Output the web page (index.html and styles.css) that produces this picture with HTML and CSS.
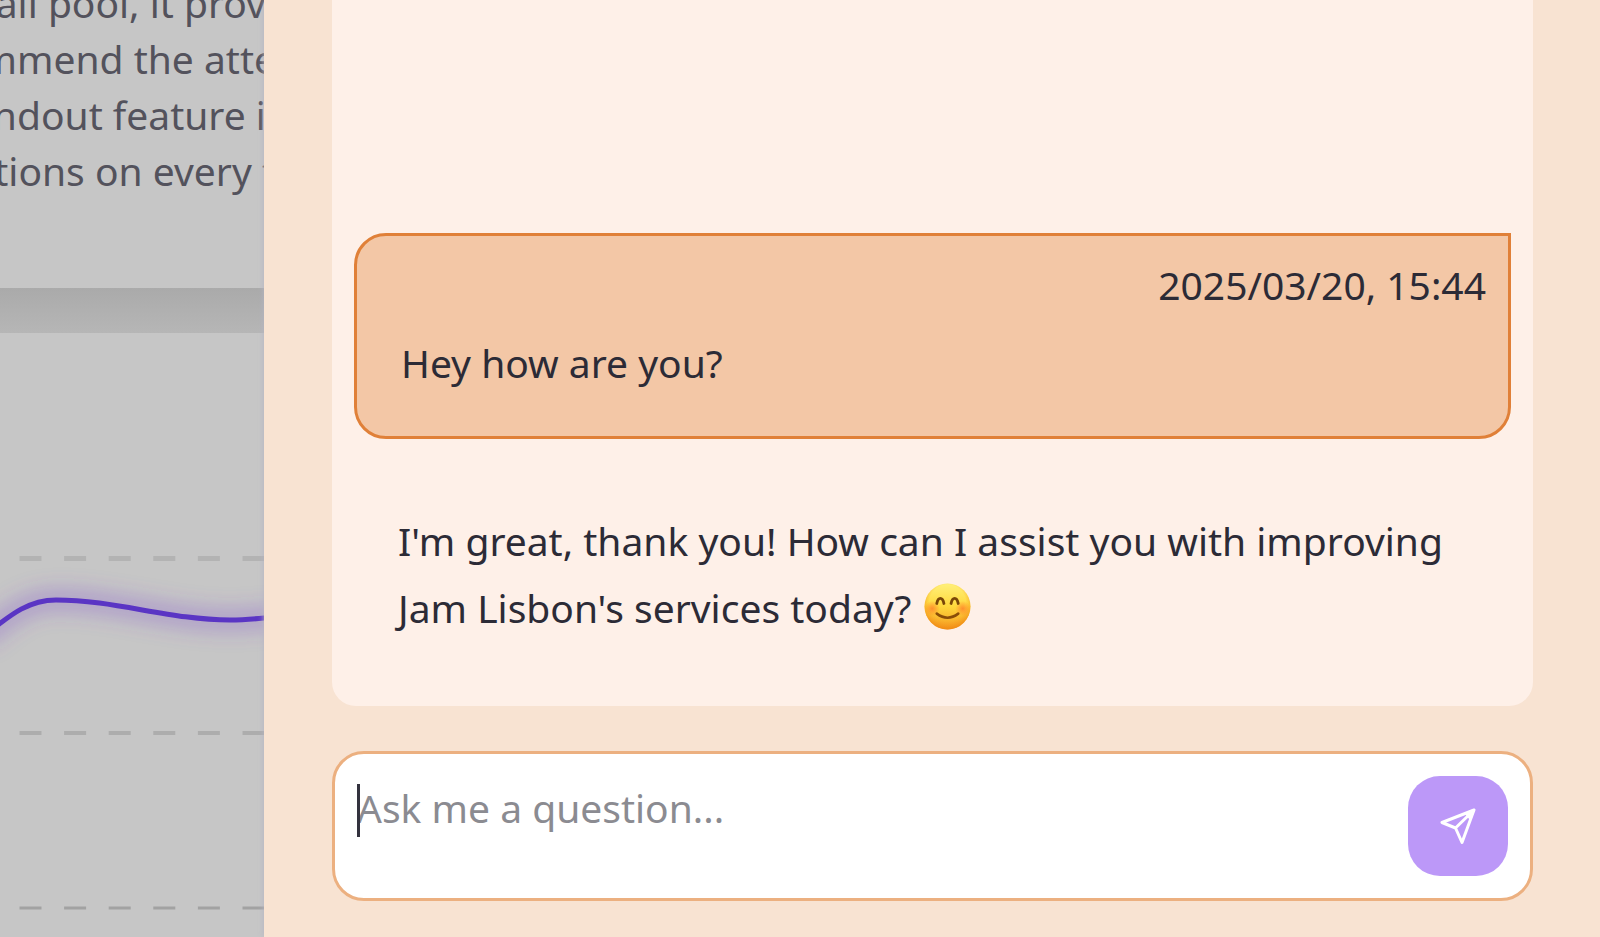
FILE: index.html
```html
<!DOCTYPE html>
<html lang="en">
<head>
<meta charset="utf-8">
<meta name="viewport" content="width=device-width, initial-scale=1">
<title>Assistant</title>
<link rel="stylesheet" href="styles.css">
</head>
<body>
<div class="layout">
  <main class="page">
    <section class="summary">
      <p class="summary-text">all pool, it provi<br>mmend the atte<br>ndout feature i&nbsp;<br>tions on every t</p>
    </section>
    <section class="chart">
      <svg class="chart-plot" viewBox="0 0 264 604" role="img" aria-label="Trend line">
        <defs>
          <filter id="glow" x="-20%" y="-200%" width="140%" height="500%"><feGaussianBlur stdDeviation="10"/></filter>
        </defs>
        <g stroke="#adadad" stroke-dasharray="22 22.6">
          <path d="M19.5 225.500H264" stroke-width="5" stroke="#b3b3b3"/>
          <path d="M19.500 400H264" stroke-width="4"/>
          <path d="M19.500 575H264" stroke-width="3" stroke="#a2a2a2"/>
        </g>
        <path d="M-20 306C4 288 24 267 56 267C115 267 170 287 230 287Q250 287 280 283" fill="none" stroke="#7a3fd0" stroke-opacity=".3" stroke-width="22" filter="url(#glow)"/>
        <path d="M-20 306C4 288 24 267 56 267C115 267 170 287 230 287Q250 287 280 283" fill="none" stroke="#5a35c4" stroke-width="5"/>
      </svg>
    </section>
  </main>
  <aside class="drawer">
    <div class="messages">
      <article class="bubble">
        <time class="bubble-time" datetime="2025-03-20T15:44">2025/03/20, 15:44</time>
        <p class="message-text">Hey how are you?</p>
      </article>
      <article class="reply">
        <p class="message-text">I'm great, thank you! How can I assist you with improving Jam Lisbon's services today? <svg class="emoji" viewBox="0 0 46 46" role="img" aria-label="Smiling face">
          <defs>
            <linearGradient id="face" x1="0" y1="0" x2="0" y2="1"><stop offset="0" stop-color="#fff07a"/><stop offset=".5" stop-color="#ffd83c"/><stop offset="1" stop-color="#f59a22"/></linearGradient>
            <radialGradient id="rim" cx=".5" cy=".42" r=".58"><stop offset=".68" stop-color="#f79a1c" stop-opacity="0"/><stop offset="1" stop-color="#ee8510" stop-opacity=".75"/></radialGradient>
            <radialGradient id="blush"><stop offset="0" stop-color="#ff7a2a" stop-opacity=".75"/><stop offset="1" stop-color="#ff7a2a" stop-opacity="0"/></radialGradient>
          </defs>
          <circle cx="23" cy="23" r="22.500" fill="url(#face)"/>
          <circle cx="23" cy="23" r="22.500" fill="url(#rim)"/>
          <circle cx="8" cy="25" r="7.500" fill="url(#blush)"/>
          <circle cx="38" cy="25" r="7.500" fill="url(#blush)"/>
          <path d="M12.500 20Q13.500 15 16 15T19.500 20M26.500 20Q27.500 15 30 15T33.500 20" fill="none" stroke="#7a4708" stroke-width="2.800" stroke-linecap="round"/>
          <path d="M12.500 30Q23 38 33.500 30" fill="none" stroke="#8a4d08" stroke-width="2.600" stroke-linecap="round"/>
        </svg></p>
      </article>
    </div>
    <form class="composer">
      <div class="field">
        <textarea class="field-input" rows="1" aria-label="Question" placeholder="Ask me a question..."></textarea>
        <span class="caret"></span>
      </div>
      <button class="send" type="button" aria-label="Send">
        <svg class="send-icon" viewBox="0 0 36 36"><path d="M34 2L2 14.500L15.500 20L22 34.500ZM34 2L15.500 20" fill="none" stroke="#fff" stroke-width="3" stroke-linejoin="round"/><path d="M34 2L26 5.500L30.500 11Z" fill="#fff" stroke="#fff" stroke-width="2" stroke-linejoin="round"/></svg>
      </button>
    </form>
  </aside>
</div>
</body>
</html>
```
FILE: styles.css
```css
* {
  box-sizing: border-box;
}

body {
  margin: 0;
  font-family: "Noto Sans", sans-serif;
  font-size: 39px;
  line-height: 56px;
  color: #2c2b36;
}

p {
  margin: 0;
}

.layout {
  display: grid;
  grid-template-columns: 264px minmax(0, 1fr);
  min-height: 100vh;
}

.page {
  display: flex;
  flex-direction: column;
  gap: 45px;
  overflow: hidden;
  background: linear-gradient(#aaa 288px, #b6b6b6 333px);
}

.summary {
  height: 288px;
  background: #c6c6c6;
}

.summary-text {
  margin: -25px -12px 0 -40px;
  text-align: right;
  white-space: nowrap;
  color: #53525c;
}

.chart {
  flex: 1;
  background: #c6c6c6;
}

.chart-plot {
  display: block;
  width: 100%;
}

.drawer {
  display: flex;
  flex-direction: column;
  gap: 45px;
  padding: 0 67px 36px 68px;
  background: #f8e3d2;
  box-shadow: 0 0 6px #b4b4c4;
}

.messages {
  display: flex;
  flex: 1;
  flex-direction: column;
  justify-content: flex-end;
  gap: 68px;
  padding: 0 22px 65px;
  border-radius: 0 0 24px 24px;
  background: #fef0e8;
}

.bubble {
  display: flex;
  flex-direction: column;
  gap: 16px;
  padding: 21px 22px 40px 44px;
  border: 3px solid #e08038;
  border-radius: 32px 0 32px 32px;
  background: #f3c7a6;
}

.bubble-time {
  align-self: flex-end;
}

.message-text {
  line-height: 67px;
}

.reply {
  padding: 0 44px;
}

.emoji {
  width: 47px;
  height: 47px;
  margin-left: 2px;
  vertical-align: -7px;
}

.composer {
  display: flex;
  align-items: flex-start;
  gap: 24px;
  padding: 22px;
  border: 3px solid #ecb080;
  border-radius: 32px;
  background: #fff;
}

.field {
  position: relative;
  display: flex;
  flex: 1;
  padding-top: 4px;
}

.field-input {
  width: 100%;
  height: 56px;
  padding: 0;
  border: 0;
  outline: 0;
  resize: none;
  overflow: hidden;
  background: transparent;
  font: inherit;
  color: inherit;
}

.field-input::placeholder {
  color: #8b8b91;
  opacity: 1;
}

.caret {
  position: absolute;
  top: 8px;
  left: 0;
  width: 3px;
  height: 53px;
  background: #33323e;
}

.send {
  display: grid;
  place-items: center;
  width: 100px;
  height: 100px;
  padding: 0;
  border: 0;
  border-radius: 32px;
  background: #bc98f8;
}

.send-icon {
  width: 36px;
  height: 36px;
}
```
